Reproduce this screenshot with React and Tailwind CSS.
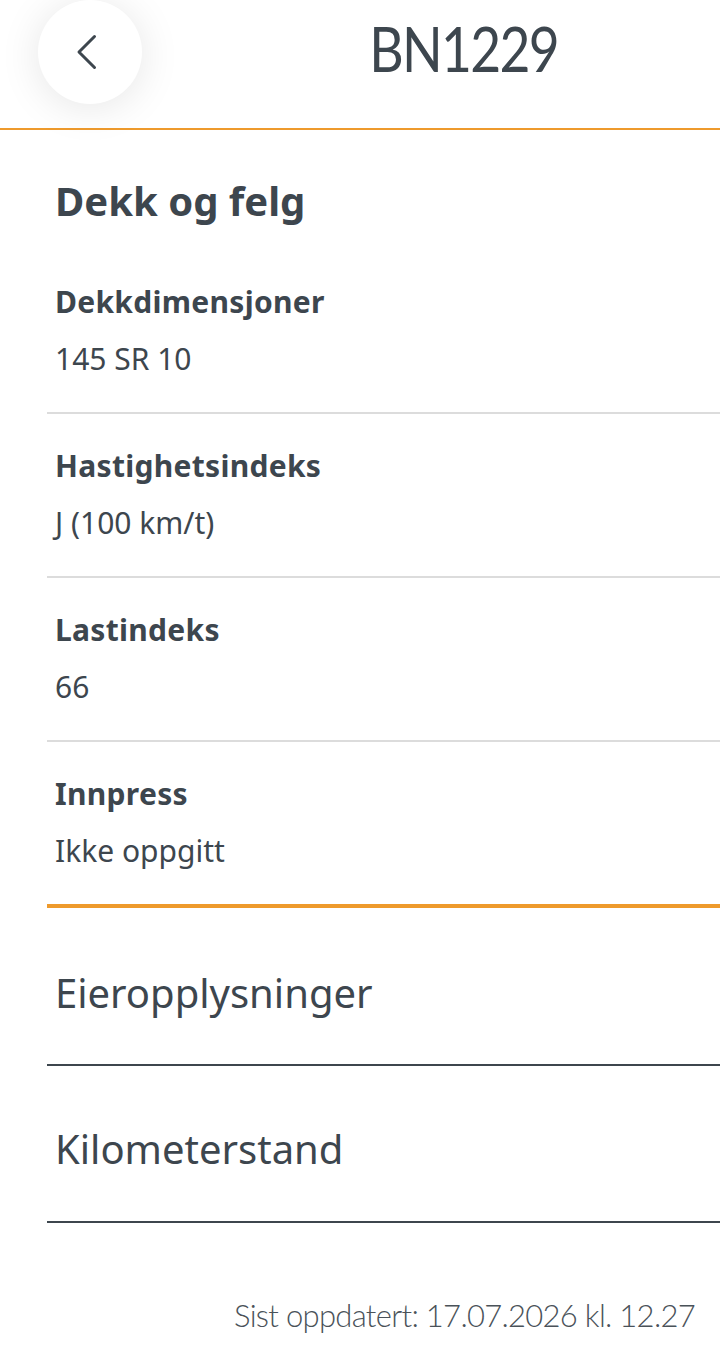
import React from 'react';

const rows = [
    { label: 'Dekkdimensjoner', value: '145 SR 10' },
    { label: 'Hastighetsindeks', value: 'J (100 km/t)' },
    { label: 'Lastindeks', value: '66' },
    { label: 'Innpress', value: 'Ikke oppgitt' },
];

const App = () => {
    return (
        <div className="min-h-screen bg-white text-[#3d464e] font-['Noto_Sans',sans-serif]">
            <header className="h-[130px] flex items-start border-b-2 border-[#ee9a2c]">
                <button className="ml-[38px] w-[104px] h-[104px] rounded-full bg-white shadow-[0_4px_40px_rgba(0,0,0,0.10)] flex items-center justify-center">
                    <svg width="40" height="40" viewBox="0 0 40 40" fill="none" stroke="#3d464e" strokeWidth="3" strokeLinecap="round" strokeLinejoin="round">
                        <path d="M24.5 4.5 L9 20 L24.5 35.5" />
                    </svg>
                </button>
                <div className="flex-1 flex justify-center pl-[66px] pt-[12px]">
                    <h1 className="font-['Lato',sans-serif] text-[62px] leading-[72px] font-normal tracking-[-2px] scale-x-[0.86]">BN1229</h1>
                </div>
            </header>

            <main className="ml-[47px]">
                <h2 className="pl-[8px] pt-[46px] text-[40px] leading-[50px] font-bold">Dekk og felg</h2>
                <div className="mt-[24px]">
                    {rows.map((r, i) => (
                        <div
                            key={r.label}
                            className={
                                i === rows.length - 1
                                    ? 'pl-[8px] pt-[34px] pb-[35px] border-b-4 border-[#ee9a2c]'
                                    : 'pl-[8px] pt-[34px] pb-[35px] border-b-2 border-[#dcdcdc]'
                            }
                        >
                            <div className="text-[30px] leading-[36px] font-bold tracking-[0.3px]">{r.label}</div>
                            <div className="mt-[21px] text-[30px] leading-[36px] font-normal">{r.value}</div>
                        </div>
                    ))}
                </div>

                <div className="pl-[8px] pt-[60px] pb-[46px] border-b-2 border-[#3d464e]">
                    <div className="text-[40px] leading-[50px]">Eieropplysninger</div>
                </div>
                <div className="pl-[8px] pt-[58px] pb-[47px] border-b-2 border-[#3d464e]">
                    <div className="text-[40px] leading-[50px]">Kilometerstand</div>
                </div>
            </main>

            <p className="mt-[72px] pr-[25px] text-right font-['Lato',sans-serif] text-[31px] leading-[40px] font-light tracking-[-0.7px] text-[#4a5259]">
                Sist oppdatert: 17.07.2026 kl. 12.27
            </p>
        </div>
    );
};

export default App;
